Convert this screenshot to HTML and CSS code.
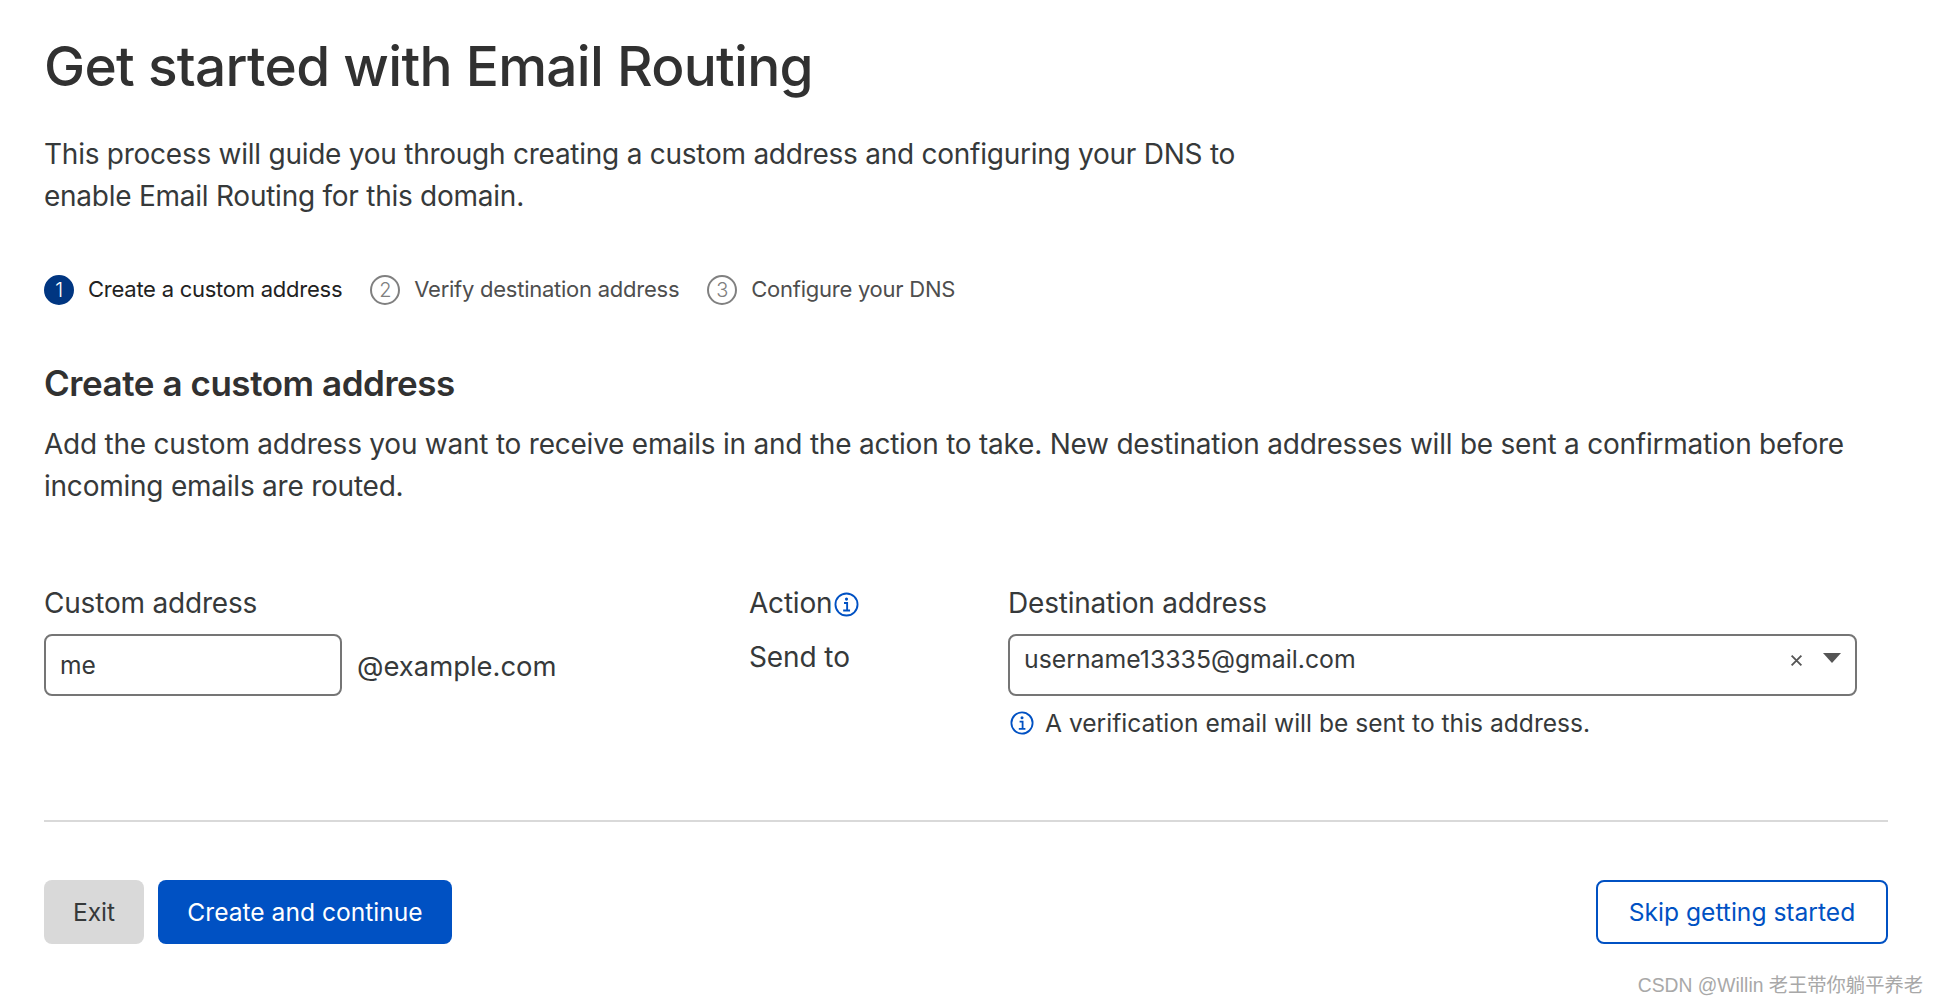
FILE: index.html
```html
<!DOCTYPE html>
<html lang="en">
<head>
<meta charset="utf-8">
<title>Get started with Email Routing</title>
<link rel="stylesheet" href="styles.css">
</head>
<body>
<main class="page">
  <h1 class="title">Get started with Email Routing</h1>
  <p class="lead">This process will guide you through creating a custom address and configuring your DNS to<br>enable Email Routing for this domain.</p>
  <ol class="steps">
    <li class="step step-active"><span class="step-num">1</span><span class="step-text">Create a custom address</span></li>
    <li class="step"><span class="step-num">2</span><span class="step-text">Verify destination address</span></li>
    <li class="step"><span class="step-num">3</span><span class="step-text">Configure your DNS</span></li>
  </ol>
  <h2 class="subtitle">Create a custom address</h2>
  <p class="desc">Add the custom address you want to receive emails in and the action to take. New destination addresses will be sent a confirmation before incoming emails are routed.</p>
  <form class="fields">
    <div class="col-address">
      <div class="label">Custom address</div>
      <div class="address-row">
        <div class="input">me</div>
        <span class="domain">@example.com</span>
      </div>
    </div>
    <div class="col-action">
      <div class="label label-icon">Action<svg class="info info-label" viewBox="0 0 24 24" aria-hidden="true"><circle cx="12" cy="12" r="10.6"/><path d="M9.6 10.6h3v7M8.8 17.8h6.6"/><circle class="dot" cx="12" cy="6.8" r="1.5"/></svg></div>
      <div class="action-value">Send to</div>
    </div>
    <div class="col-dest">
      <div class="label">Destination address</div>
      <div class="select">
        <span class="select-value">username13335@gmail.com</span>
        <svg class="clear" viewBox="0 0 12 12" aria-hidden="true"><path d="M1.5 1.5l9 9M10.5 1.5l-9 9"/></svg>
        <svg class="caret" viewBox="0 0 18 10" aria-hidden="true"><path d="M0 0h18L9 10z"/></svg>
      </div>
      <div class="hint"><svg class="info info-hint" viewBox="0 0 24 24" aria-hidden="true"><circle cx="12" cy="12" r="10.6"/><path d="M9.6 10.6h3v7M8.8 17.8h6.6"/><circle class="dot" cx="12" cy="6.8" r="1.5"/></svg><span>A verification email will be sent to this address.</span></div>
    </div>
  </form>
  <hr class="rule">
  <div class="actions">
    <div class="actions-left">
      <button class="btn btn-grey" type="button">Exit</button>
      <button class="btn btn-primary" type="button">Create and continue</button>
    </div>
    <button class="btn btn-outline" type="button">Skip getting started</button>
  </div>
</main>
<div class="watermark">CSDN @Willin 老王带你躺平养老</div>
</body>
</html>
```
FILE: styles.css
```css
* { box-sizing: border-box; }
html, body { margin: 0; height: 100%; background: #fff; }
body {
  font-family: Inter, "Noto Sans CJK SC", sans-serif;
  color: #36393a;
  overflow: hidden;
  position: relative;
}
.page { padding: 28px 50px 0 44px; }
.title { margin: 0; font-size: 55px; line-height: 76px; font-weight: 500; letter-spacing: -0.72px; color: #313131; }
.lead { margin: 29px 0 0; font-size: 28px; line-height: 42px; letter-spacing: -0.25px; color: #36393a; }
.steps { list-style: none; margin: 57px 0 0; padding: 0; display: flex; gap: 28px; }
.step { display: flex; align-items: center; gap: 14px; font-size: 22px; line-height: 30px; letter-spacing: -0.25px; color: #4e4e4e; }
.step-active { color: #222; }
.step-num {
  width: 30px; height: 30px; margin: 1px 0 -1px; border-radius: 50%;
  border: 2px solid #808080; color: #808080;
  display: flex; align-items: center; justify-content: center;
  font-size: 20px; font-weight: 300;
}
.step-active .step-num { background: #003681; border-color: #003681; color: #fff; }
.subtitle { margin: 54px 0 0; font-size: 35px; line-height: 50px; font-weight: 600; letter-spacing: -0.45px; color: #313131; }
.desc { margin: 15px 0 0; font-size: 28px; line-height: 42px; letter-spacing: -0.23px; }
.fields { display: flex; margin-top: 78px; }
.col-address { width: 705px; }
.col-action { width: 259px; }
.col-dest { width: 849px; }
.label { font-size: 28px; line-height: 36px; letter-spacing: -0.2px; color: #36393a; }
.label-icon { display: flex; align-items: center; gap: 2px; }
.address-row { display: flex; align-items: center; gap: 15px; margin-top: 13px; }
.input {
  width: 298px; height: 62px; padding: 0 14px;
  border: 2px solid #757575; border-radius: 8px;
  display: flex; align-items: center; font-size: 24.6px;
}
.domain { font-size: 27.4px; margin-top: 2px; }
.action-value { font-size: 28px; line-height: 36px; letter-spacing: -0.1px; margin-top: 18px; }
.select {
  height: 62px; margin-top: 13px; padding: 5px 14px 0 14px;
  border: 2px solid #757575; border-radius: 8px;
  display: flex; align-items: flex-start; font-size: 24.8px; line-height: 36px;
}
.select-value { flex: 1; }
.clear { width: 13px; height: 13px; margin-top: 13px; fill: none; stroke: #555; stroke-width: 1.7; }
.caret { width: 18px; height: 10px; margin: 12px 0 0 20px; fill: #555; }
.hint { display: flex; align-items: center; gap: 11px; margin-top: 9px; padding-left: 2px; font-size: 24.6px; line-height: 36px; }
.info { fill: none; stroke: #0051c3; stroke-width: 1.8; flex: none; }
.info .dot { fill: #0051c3; stroke: none; }
.info-label { width: 25px; height: 25px; margin-top: 2px; }
.info-hint { width: 24px; height: 24px; }
.rule { margin: 79px 0 0; border: 0; border-top: 2px solid #d9d9d9; }
.actions { display: flex; justify-content: space-between; margin-top: 58px; }
.actions-left { display: flex; gap: 14px; }
.btn {
  height: 64px; border-radius: 8px; border: 0;
  font-family: inherit; font-size: 24.6px; display: block;
}
.btn-grey { width: 100px; background: #d9d9d9; color: #36393a; }
.btn-primary { width: 294px; background: #0051c3; color: #fff; }
.btn-outline { width: 292px; background: #fff; color: #0051c3; border: 2px solid #0051c3; }
.watermark {
  position: absolute; right: 15px; bottom: 6px; line-height: 24px;
  font-family: "Liberation Sans", "Noto Sans CJK SC", sans-serif;
  font-size: 19.3px; color: #a8a8a8;
}
```
